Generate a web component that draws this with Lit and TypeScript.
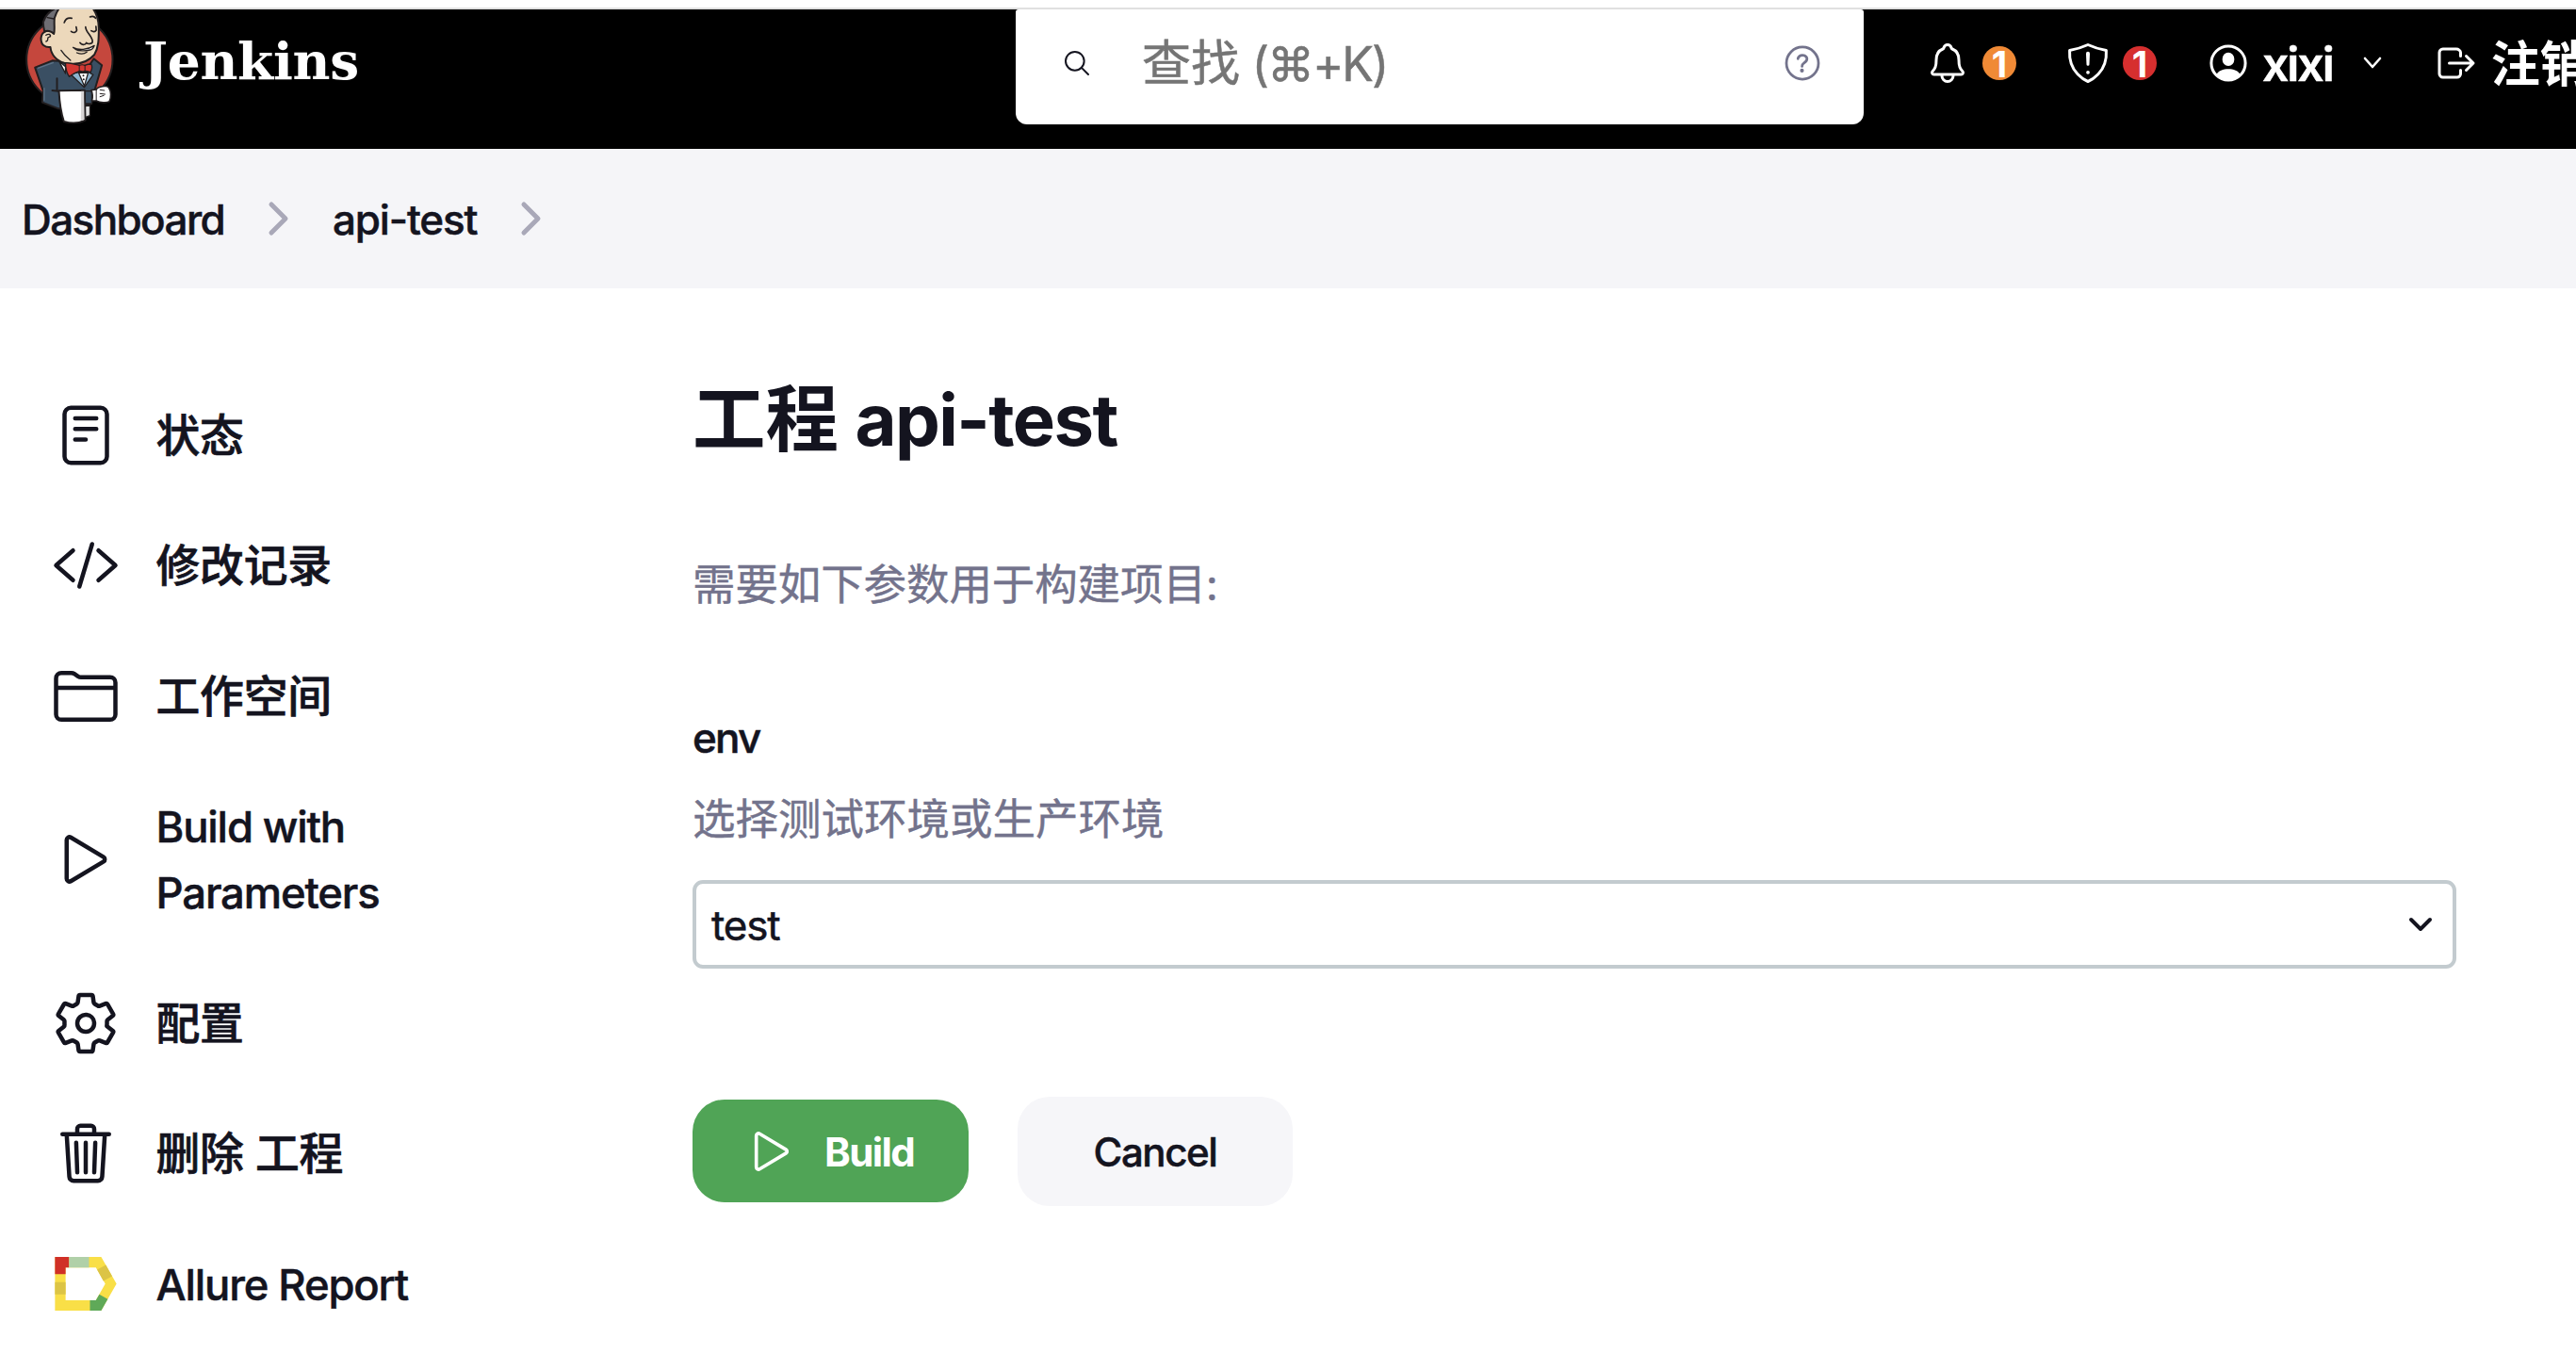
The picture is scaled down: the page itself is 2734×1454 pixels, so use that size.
import { LitElement, html, css, svg } from "lit";
import { customElement } from "lit/decorators.js";

const ICONS: Record<string, unknown> = {
  reader: svg`<rect x="96" y="48" width="320" height="416" rx="48"/><path d="M176 128h160M176 208h160M176 288h80"/>`,
  code: svg`<path d="M160 368L32 256l128-112M352 368l128-112-128-112M304 96l-96 320"/>`,
  folder: svg`<path d="M440 432H72a40 40 0 01-40-40V120a40 40 0 0140-40h75.89a40 40 0 0122.19 6.72l27.84 18.56a40 40 0 0022.19 6.72H440a40 40 0 0140 40v240a40 40 0 01-40 40zM32 192h448"/>`,
  play: svg`<path d="M112 111v290c0 17.44 17 28.52 31 20.16l247.9-148.37c12.12-7.25 12.12-26.33 0-33.58L143 90.84c-14-8.36-31 2.72-31 20.16z"/>`,
  gear: svg`<path d="M262.29 192.31a64 64 0 1057.4 57.4 64.13 64.13 0 00-57.4-57.4zM416.39 256a154.34 154.34 0 01-1.53 20.79l45.21 35.46a10.81 10.81 0 012.45 13.75l-42.77 74a10.81 10.81 0 01-13.14 4.59l-44.9-18.08a16.11 16.11 0 00-15.17 1.75A164.48 164.48 0 01325 400.8a15.94 15.94 0 00-8.82 12.14l-6.73 47.89a11.08 11.08 0 01-10.68 9.17h-85.54a11.11 11.11 0 01-10.69-8.87l-6.72-47.82a16.07 16.07 0 00-9-12.22 155.3 155.3 0 01-21.46-12.57 16 16 0 00-15.11-1.71l-44.89 18.07a10.81 10.81 0 01-13.14-4.58l-42.77-74a10.8 10.8 0 012.45-13.75l38.21-30a16.05 16.05 0 006-14.08c-.36-4.17-.58-8.33-.58-12.5s.21-8.27.58-12.35a16 16 0 00-6.07-13.94l-38.19-30A10.81 10.81 0 0149.48 186l42.77-74a10.81 10.81 0 0113.14-4.59l44.9 18.08a16.11 16.11 0 0015.17-1.75A164.48 164.48 0 01187 111.2a15.94 15.94 0 008.82-12.14l6.73-47.89A11.08 11.08 0 01213.23 42h85.54a11.11 11.11 0 0110.69 8.87l6.72 47.82a16.07 16.07 0 009 12.22 155.3 155.3 0 0121.46 12.57 16 16 0 0015.11 1.71l44.89-18.07a10.81 10.81 0 0113.14 4.58l42.77 74a10.8 10.8 0 01-2.45 13.75l-38.21 30a16.05 16.05 0 00-6.05 14.08c.33 4.14.55 8.3.55 12.47z"/>`,
  trash: svg`<path d="M112 112l20 320c.95 18.49 14.4 32 32 32h184c17.67 0 30.87-13.51 32-32l20-320M80 112h352M192 112V72a23.93 23.93 0 0124-24h80a23.93 23.93 0 0124 24v40M256 176v224M184 176l8 224M328 176l-8 224"/>`,
  search: svg`<path d="M221.09 64a157.09 157.09 0 10157.09 157.09A157.1 157.1 0 00221.09 64zM338.29 338.29L448 448"/>`,
  help: svg`<circle cx="256" cy="256" r="198"/><path d="M200 202.29s.84-17.5 19.57-32.57C230.68 160.77 244 158.18 256 158c10.93-.14 20.69 1.67 26.53 4.45 10 4.76 29.47 16.38 29.47 41.09 0 26-17 37.81-36.37 50.8S251 281.43 251 296"/><circle cx="250" cy="348" r="24" fill="currentColor" stroke="none"/>`,
  bell: svg`<path d="M427.68 351.43C402 320 383.87 304 383.87 217.35 383.87 138 343.35 109.73 310 96c-4.43-1.82-8.6-6-9.95-10.55C294.2 65.54 277.8 48 256 48s-38.21 17.55-44 37.47c-1.35 4.6-5.52 8.71-9.95 10.53-33.39 13.75-73.87 41.92-73.87 121.35C128.13 304 110 320 84.32 351.43 73.68 364.45 83 384 101.61 384h308.88c18.51 0 27.77-19.61 17.19-32.57zM320 384v16a64 64 0 01-128 0v-16"/>`,
  shield: svg`<path d="M463.1 112.37C373.68 96.33 336.71 84.45 256 48c-80.71 36.45-117.68 48.33-207.1 64.37C32.7 369.13 240.58 457.79 256 464c15.42-6.21 223.3-94.87 207.1-351.63z"/><path d="M250.3 148L256 270l5.7-122a5.7 5.7 0 00-11.4 0z"/><circle cx="256" cy="360" r="20" fill="currentColor" stroke="none"/>`,
  user: svg`<circle cx="256" cy="256" r="193"/><ellipse cx="256" cy="212" rx="68" ry="76" fill="currentColor" stroke="none"/><path fill="currentColor" stroke="none" d="M116 392C140 340 200 322 256 322s116 18 140 70A195 195 0 0 1 116 392z"/>`,
  logout: svg`<path d="M304 336v40a40 40 0 01-40 40H104a40 40 0 01-40-40V136a40 40 0 0140-40h152c22.09 0 48 17.91 48 40v40M368 336l80-80-80-80M176 256h256"/>`,
};

const icon = (name: string, cls: string) =>
  html`<svg class="icon ${cls}" viewBox="0 0 512 512">${ICONS[name]}</svg>`;

const allure = html`<svg class="allure" viewBox="83 521 197 172">
  <path fill="#f9df47" fill-rule="evenodd" d="M83 521H231L280 607 231 693H83zM117 555V660H214L244 607 214 555z"/>
  <path fill="#d03027" d="M83 521h45v34h-11v21H83z"/>
  <path fill="#b0d0a8" d="M128 521h64v34h-64z"/>
  <path fill="#dcc445" d="M83 602h34v39H83zM218 562L246 547 266 583 238 598z"/>
  <path fill="#5fa958" d="M195 660H214L225 641 252 656 231 693H195z"/>
</svg>`;

const butler = html`<svg class="butler" viewBox="78 30 284 369">
  <circle cx="221" cy="190" r="137" fill="#c5473d" stroke="#231f20" stroke-width="6"/>
  <g stroke="#231f20" stroke-width="6" stroke-linejoin="round" stroke-linecap="round">
    <path fill="#3a4f63" d="M111 215L166 193 205 196 262 240 298 187 324 208 303 280 290 330 230 345 186 346 134 326 137 290z"/>
    <path fill="none" d="M181 250v36M166 288l20 2"/>
    <path fill="#fff" stroke-width="4" d="M188 196l20 16v22z"/>
    <path fill="#8db4cf" stroke-width="4" d="M224 236l26-6 32 0 14 8-28 40z"/>
    <path fill="#fff" stroke-width="4" d="M250 232h30l-12 42z"/>
    <path fill="#ecd8bb" d="M176 22C160 60 172 90 170 106 160 92 132 96 130 122c0 22 14 30 30 28 2 24 20 44 44 50 30 6 70 4 96-26 14-24 14-50 14-84 0-30-8-50-22-68z"/>
    <path fill="#6f6e73" d="M186 22C160 32 144 50 137 70c0 14 2 22 4 30 8-4 22-2 30 8 4-14 0-30 2-50 4-14 10-26 18-36z"/>
    <path fill="none" stroke-width="4" d="M150 56l22 4M146 112c8-6 16-2 14 4l-8 4c0 8-2 12-6 12M194 160c10 16 20 24 30 32"/>
    <path fill="none" stroke-width="5" d="M204 72c4-12 14-16 24-14M286 54c8-4 14-2 18 4M226 100c8 6 16 4 18-4l-2-10M290 98c6 4 12 4 16-2l-1-12M272 86c0 16 22 30 22 46 0 8-14 10-20 4M254 136c6 8 14 8 20 2"/>
    <path fill="#fff" stroke-width="4" d="M232 151c18 10 46 8 68-6-4 10-10 14-14 14-14 4-36 4-46-2z"/>
    <path fill="none" stroke-width="4" d="M244 168c10 4 24 4 32-2"/>
    <path fill="#d33833" stroke-width="4" d="M208 200c16 2 30 4 44 8 4-2 14-2 18 0 8-4 14-4 20-4 4 8 2 18-2 26-6-2-12-4-18-4-6 2-12 2-16 0-14 4-24 10-34 18-8-12-12-30-12-44z"/>
    <path fill="none" stroke-width="3" d="M252 208v18M270 208v18"/>
    <path fill="#3a4f63" stroke-width="4" d="M270 290h22v40h-22z"/>
    <path fill="#e4e4e4" stroke-width="4" d="M270 338l16-2v32l-16 6z"/>
    <path fill="#fff" d="M187 289l82-2 2 96c-20 10-48 10-68 4-10-30-14-60-16-98z"/>
    <path fill="#fff" stroke-width="5" d="M290 287l16-2c6-10 34-14 40-6 8 12 8 32 2 44-8 6-30 4-42-2l-14 0c4-12 2-24-2-34z"/>
    <path fill="none" stroke-width="3" d="M306 286v34M318 286l14 2M318 298l16 2M318 308l12-4"/>
  </g>
  <circle cx="265" cy="241" r="3" fill="#231f20"/><circle cx="266" cy="253" r="3" fill="#231f20"/>
  <path fill="#d8d5d5" d="M258 290h9v92l-10 2z"/>
  <path fill="none" stroke="#5e7488" stroke-width="4" d="M120 217l50-18M140 320V280"/>
</svg>`;

const TASKS = [
  { icon: "reader", label: "状态" },
  { icon: "code", label: "修改记录" },
  { icon: "folder", label: "工作空间" },
  { icon: "play", label: "Build with Parameters" },
  { icon: "gear", label: "配置" },
  { icon: "trash", label: "删除 工程" },
  { icon: "allure", label: "Allure Report" },
];

@customElement("app-root")
export class AppRoot extends LitElement {
  static styles = css`
    :host { display: block; width: 2734px; height: 1454px; overflow: hidden; background: #fff; color: #14141f;
      font-family: Inter, "Noto Sans CJK SC", sans-serif; font-size: 45.5px; line-height: 1.5; font-weight: 500; }
    * { box-sizing: border-box; }
    .icon { fill: none; stroke: currentColor; stroke-width: 32; stroke-linecap: round; stroke-linejoin: round; flex: none; display: block; }
    .i72 { width: 72px; height: 72px; margin: -1px 0; } .i58 { width: 58px; height: 58px; } .i48 { width: 48px; height: 48px; }
    .i32 { width: 32px; height: 32px; } .i44 { width: 44px; height: 44px; }
    .page-top { height: 10px; border-bottom: 2px solid #e0e0e0; }
    header { height: 148px; background: #000; color: #fff; display: flex; align-items: flex-start; overflow: hidden; white-space: nowrap; }
    .brand { width: 1078px; display: flex; padding-left: 26px; flex: none; }
    .butler { width: 95px; height: 123px; flex: none; }
    .wordmark { font-family: "DejaVu Serif", "Liberation Serif", serif; font-weight: 700; font-size: 55px; line-height: 64px;
      letter-spacing: -0.3px; margin: 23px 0 0 31px; }
    .search { width: 900px; height: 122px; flex: none; background: #fff; border-radius: 3px 3px 12px 12px; display: flex; align-items: center;
      padding: 0 43px 8px 49px; color: #14141f; }
    .placeholder { flex: 1; margin-left: 53px; padding-top: 2px; font-size: 52px; font-weight: 400; color: #757575; line-height: 70px;
      -webkit-text-stroke: 0.5px currentColor; }
    .keys { font-size: 50px; letter-spacing: -1.9px; margin-left: -2px; }
    .help { color: #73738c; }
    .tools { display: flex; align-items: center; height: 114px; font-size: 50px; font-weight: 600; }
    .badge { width: 36px; height: 36px; border-radius: 50%; font-size: 38px; line-height: 38px; text-align: center; font-weight: 700; }
    .orange { background: #f08a36; margin-left: 13px; } .red { background: #d62f2f; margin-left: 13px; }
    .bell { margin-left: 65px; } .shield { margin-left: 52px; } .user { margin-left: 52px; }
    .name { margin-left: 12px; padding-top: 2px; letter-spacing: -2.1px; -webkit-text-stroke: 0.5px currentColor; }
    .caret { width: 22px; height: 14px; margin-left: 31px; fill: none; stroke: #fff; stroke-width: 2.6; stroke-linecap: round; stroke-linejoin: round; flex: none; }
    .logout { margin-left: 54px; }
    .out { margin-left: 13px; padding-top: 4px; font-size: 52px; }
    nav { height: 148px; background: #f5f5f8; display: flex; align-items: center; padding-left: 23px; font-size: 44px; }
    .crumb { padding-top: 2px; letter-spacing: -1.6px; -webkit-text-stroke: 0.5px currentColor; }
    .crumb.job { letter-spacing: -1.2px; margin-left: 1px; }
    .sep { width: 24px; height: 38px; margin: 0 44px 0 46px; fill: none; stroke: #a9a8b8; stroke-width: 5; stroke-linecap: round; stroke-linejoin: round; flex: none; }
    .columns { display: flex; }
    aside { width: 735px; flex: none; padding: 86.5px 0 0 54.5px; }
    .task { display: flex; align-items: center; gap: 39px; padding: 34.15px 0; font-size: 46.8px; line-height: 70.2px; }
    .label { width: 300px; letter-spacing: -0.2px; -webkit-text-stroke: 0.7px currentColor; }
    .label.latin { font-size: 45.4px; letter-spacing: -1.15px; padding-top: 1px; margin-bottom: -1px; -webkit-text-stroke: 0.5px currentColor; }
    .allure { width: 66px; height: 57px; margin: 0 3px; flex: none; }
    h1 { margin: 82px 0 0; font-size: 77.5px; line-height: 114px; font-weight: 600; }
    .project { font-size: 76px; font-weight: 700; letter-spacing: -1.6px; margin-left: -2px; }
    .muted { color: #73738c; font-weight: 400; line-height: 68px; -webkit-text-stroke: 0.4px currentColor; }
    .intro { margin-top: 85px; letter-spacing: -0.1px; }
    .env { font-size: 44px; line-height: 66px; margin-top: 95px; letter-spacing: -1.8px; -webkit-text-stroke: 0.5px currentColor; }
    .desc { margin-top: 20px; }
    .select { width: 1872px; height: 94px; margin-top: 30px; border: 4px solid #c3cbcf; border-radius: 11px; display: flex; align-items: center;
      justify-content: space-between; padding: 0 20px 0 16px; font-size: 44px; font-weight: 400; line-height: 66px; }
    .value { padding-top: 2px; letter-spacing: -1.2px; -webkit-text-stroke: 0.5px currentColor; }
    .arrow { width: 28px; height: 20px; fill: none; stroke: #14141f; stroke-width: 4; stroke-linecap: round; stroke-linejoin: round; }
    .actions { display: flex; align-items: center; gap: 52px; margin-top: 136px; }
    .btn { display: flex; align-items: center; border-radius: 34px; font-size: 42px; line-height: 60px; }
    .build { width: 293px; height: 109px; margin-bottom: 1px; background: #50a456; color: #fff; font-weight: 700; padding-left: 55px; gap: 27px; letter-spacing: -1.6px; }
    .btn-text { padding-top: 2px; }
    .cancel { width: 292px; height: 116px; background: #f6f6f9; justify-content: center; letter-spacing: -1.4px; -webkit-text-stroke: 0.5px currentColor; }
  `;

  render() {
    return html`
      <div class="page-top"></div>
      <header>
        <div class="brand">${butler}<span class="wordmark">Jenkins</span></div>
        <div class="search">${icon("search", "i32")}<span class="placeholder">查找 <span class="keys">(⌘+K)</span></span>${icon("help", "i44 help")}</div>
        <div class="tools">
          ${icon("bell", "i48 bell")}<span class="badge orange">1</span>
          ${icon("shield", "i48 shield")}<span class="badge red">1</span>
          ${icon("user", "i48 user")}<span class="name">xixi</span>
          <svg class="caret" viewBox="0 0 22 14"><path d="M3 2l8 9 8-9"/></svg>
          ${icon("logout", "i48 logout")}<span class="out">注销</span>
        </div>
      </header>
      <nav>
        <span class="crumb">Dashboard</span>
        <svg class="sep" viewBox="0 0 24 38"><path d="M4 4l15 15L4 34"/></svg>
        <span class="crumb job">api-test</span>
        <svg class="sep" viewBox="0 0 24 38"><path d="M4 4l15 15L4 34"/></svg>
      </nav>
      <div class="columns">
        <aside>
          ${TASKS.map((t) => html`<div class="task">
            ${t.icon === "allure" ? allure : icon(t.icon, "i72")}
            <span class="label ${/^[A-Z]/.test(t.label) ? "latin" : ""}">${t.label}</span>
          </div>`)}
        </aside>
        <main>
          <h1>工程 <span class="project">api-test</span></h1>
          <div class="muted intro">需要如下参数用于构建项目:</div>
          <div class="env">env</div>
          <div class="muted desc">选择测试环境或生产环境</div>
          <div class="select"><span class="value">test</span><svg class="arrow" viewBox="0 0 28 20"><path d="M4 5l10 10L24 5"/></svg></div>
          <div class="actions">
            <div class="btn build">${icon("play", "i58")}<span class="btn-text">Build</span></div>
            <div class="btn cancel"><span class="btn-text">Cancel</span></div>
          </div>
        </main>
      </div>
    `;
  }
}
